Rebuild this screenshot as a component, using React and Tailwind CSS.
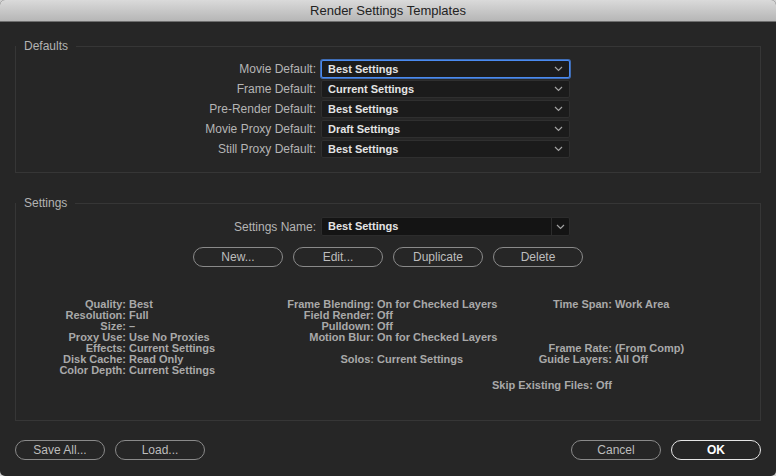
const FONT = { fontFamily: '"Liberation Sans", Arial, sans-serif' };

const DEFAULTS = [
  { label: "Movie Default:", value: "Best Settings", focused: true },
  { label: "Frame Default:", value: "Current Settings" },
  { label: "Pre-Render Default:", value: "Best Settings" },
  { label: "Movie Proxy Default:", value: "Draft Settings" },
  { label: "Still Proxy Default:", value: "Best Settings" },
];

// info columns, 7 rows each, null = empty row
const COL1 = [
  ["Quality:", "Best"],
  ["Resolution:", "Full"],
  ["Size:", "–"],
  ["Proxy Use:", "Use No Proxies"],
  ["Effects:", "Current Settings"],
  ["Disk Cache:", "Read Only"],
  ["Color Depth:", "Current Settings"],
];
const COL2 = [
  ["Frame Blending:", "On for Checked Layers"],
  ["Field Render:", "Off"],
  ["Pulldown:", "Off"],
  ["Motion Blur:", "On for Checked Layers"],
  null,
  ["Solos:", "Current Settings"],
  null,
];
const COL3 = [
  ["Time Span:", "Work Area"],
  null,
  null,
  null,
  ["Frame Rate:", "(From Comp)"],
  ["Guide Layers:", "All Off"],
  null,
];

function Chevron() {
  return (
    <svg width="9" height="6" viewBox="0 0 9 6" className="shrink-0">
      <polyline points="1,1 4.5,4.5 8,1" fill="none" stroke="#a3a3a3" strokeWidth="1.2" />
    </svg>
  );
}

function Dropdown({ value, focused }) {
  return (
    <div
      className={`w-[249px] h-[18px] flex items-center justify-between pl-[6px] pr-[6px] rounded-[2px] bg-[#1b1b1b] border ${
        focused ? "border-[#4a8af0] ring-1 ring-[#4a8af0]/70" : "border-[#2f2f2f]"
      }`}
    >
      <span className="text-[11px] font-bold text-[#e4e4e4] leading-none">{value}</span>
      <Chevron />
    </div>
  );
}

function PillButton({ children, primary }) {
  return (
    <button
      className={`w-[90px] h-[20px] rounded-full border-[1.5px] text-[12px] leading-none flex items-center justify-center ${
        primary
          ? "border-[#e6e6e6] text-white font-bold"
          : "border-[#8a8a8a] text-[#bdbdbd]"
      }`}
      style={FONT}
    >
      {children}
    </button>
  );
}

function InfoCol({ rows, labelW, valueW }) {
  return (
    <div className="flex flex-col">
      {rows.map((r, i) => (
        <div key={i} className="flex h-[11px] leading-[11px]">
          <span className="text-right" style={{ width: labelW }}>{r ? r[0] : ""}</span>
          <span className="pl-[3px] whitespace-nowrap" style={{ width: valueW }}>{r ? r[1] : ""}</span>
        </div>
      ))}
    </div>
  );
}

export default function App() {
  return (
    <div className="w-[776px] h-[476px] bg-[#d0d0d0]" style={FONT}>
      <div className="h-full rounded-[5px] overflow-hidden flex flex-col bg-[#262626]">
        {/* title bar */}
        <div className="h-[22px] shrink-0 flex items-center justify-center bg-gradient-to-b from-[#dadada] to-[#b6b6b6] border-b border-[#6e6e6e]">
          <span className="text-[13px] text-[#222] leading-none">Render Settings Templates</span>
        </div>

        <div className="flex flex-col px-[15px]">
          {/* Defaults */}
          <fieldset className="mt-[17px] border border-[#363636] p-0 pb-[14px]">
            <legend className="px-2 text-[12px] leading-[14px] text-[#b3b3b3]">Defaults</legend>
            <div className="flex flex-col gap-[2px] pt-[7px]">
              {DEFAULTS.map((d) => (
                <div key={d.label} className="flex items-center">
                  <span className="w-[300px] text-right text-[12px] text-[#b5b5b5] leading-none">{d.label}</span>
                  <div className="ml-[5px]">
                    <Dropdown value={d.value} focused={d.focused} />
                  </div>
                </div>
              ))}
            </div>
          </fieldset>

          {/* Settings */}
          <fieldset className="mt-[23px] border border-[#363636] p-0 pb-[29px]">
            <legend className="px-2 text-[12px] leading-[14px] text-[#b3b3b3]">Settings</legend>
            <div className="flex items-center pt-[7px]">
              <span className="w-[300px] text-right text-[12px] text-[#b5b5b5] leading-none">Settings Name:</span>
              <div className="ml-[5px] w-[249px] h-[19px] flex rounded-[2px] bg-[#141414] border border-[#2c2c2c]">
                <span className="flex-1 flex items-center pl-[6px] text-[11px] font-bold text-[#e4e4e4] leading-none">
                  Best Settings
                </span>
                <div className="w-[18px] flex items-center justify-center border-l border-[#2c2c2c]">
                  <Chevron />
                </div>
              </div>
            </div>

            <div className="flex justify-center gap-[10px] mt-[11px]">
              <PillButton>New...</PillButton>
              <PillButton>Edit...</PillButton>
              <PillButton>Duplicate</PillButton>
              <PillButton>Delete</PillButton>
            </div>

            <div className="mt-[32px] text-[11px] font-bold text-[#a9a9a9]">
              <div className="flex">
                <InfoCol rows={COL1} labelW={110} valueW={130} />
                <InfoCol rows={COL2} labelW={118} valueW={130} />
                <InfoCol rows={COL3} labelW={108} valueW={120} />
              </div>
              <div className="mt-[4px] h-[11px] leading-[11px] pl-[476px] whitespace-nowrap">
                Skip Existing Files: Off
              </div>
            </div>
          </fieldset>

          {/* bottom buttons */}
          <div className="mt-[19px] flex justify-between">
            <div className="flex gap-[10px]">
              <PillButton>Save All...</PillButton>
              <PillButton>Load...</PillButton>
            </div>
            <div className="flex gap-[10px]">
              <PillButton>Cancel</PillButton>
              <PillButton primary>OK</PillButton>
            </div>
          </div>
        </div>
      </div>
    </div>
  );
}
